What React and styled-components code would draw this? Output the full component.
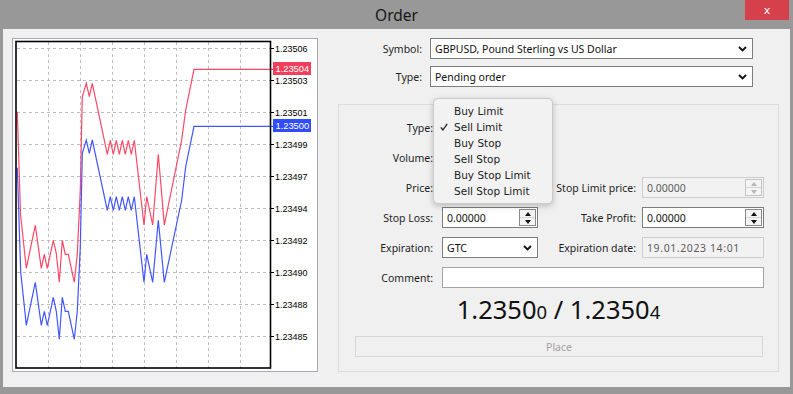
import React from 'react';
import styled, { createGlobalStyle } from 'styled-components';

const GlobalStyle = createGlobalStyle`
  html, body {
    margin: 0;
    padding: 0;
    background: #989898;
  }
  body {
    font-family: "Noto Sans", "DejaVu Sans", sans-serif;
    color: #1e1e1e;
  }
`;

const Window = styled.div`
  width: 793px;
  height: 394px;
  background: #989898;
  display: flex;
  flex-direction: column;
  overflow: hidden;
`;

const TitleBar = styled.div`
  height: 29px;
  flex: none;
  display: grid;
  grid-template-columns: 1fr auto 1fr;
  align-items: center;
`;

const Title = styled.span`
  grid-column: 2;
  font-size: 15.5px;
  color: #161616;
`;

const CloseButton = styled.div`
  grid-column: 3;
  justify-self: end;
  align-self: start;
  margin-right: 4px;
  width: 44px;
  height: 20px;
  background: #d5404b;
  color: #fff;
  display: flex;
  align-items: center;
  justify-content: center;
  font-family: "DejaVu Sans", sans-serif;
  font-size: 11px;
`;

const Body = styled.div`
  margin: 0 3px;
  height: 358px;
  box-sizing: border-box;
  background: #f0f0f0;
  display: flex;
  gap: 20px;
  padding: 9px 0 0 9px;
`;

const ChartPanel = styled.div`
  width: 306px;
  height: 334px;
  box-sizing: border-box;
  border: 1px solid #a8a8b0;
  background: #fff;
  flex: none;

  svg {
    display: block;
  }
`;

const Form = styled.div`
  width: 441px;
  display: flex;
  flex-direction: column;
`;

const TopRow = styled.div`
  display: grid;
  grid-template-columns: 92px 323px;
  height: 21px;
  margin-bottom: 7px;
  align-items: center;
`;

const Label = styled.span`
  text-align: right;
  padding-right: ${({ $pad }) => $pad || 8}px;
  font-size: 10.5px;
  white-space: nowrap;
`;

const Select = styled.div`
  height: 21px;
  box-sizing: border-box;
  border: 1px solid #7c7c7c;
  background: #fff;
  display: flex;
  align-items: center;
  justify-content: space-between;
  padding: 0 5px 0 4px;
  font-size: 10.5px;
  color: #111;
`;

const Input = styled.div`
  height: 21px;
  box-sizing: border-box;
  border: 1px solid ${({ $disabled, $light }) => ($disabled ? '#cdcdcd' : $light ? '#a4a4a4' : '#7c7c7c')};
  background: ${({ $disabled }) => ($disabled ? '#f2f2f2' : '#fff')};
  color: ${({ $disabled }) => ($disabled ? '#5c5c5c' : '#111')};
  display: flex;
  align-items: stretch;
  font-size: 10.5px;
  letter-spacing: ${({ $spaced }) => ($spaced ? '0.6px' : '0')};
  grid-column: ${({ $span }) => $span || 'auto'};
`;

const InputValue = styled.span`
  flex: 1;
  display: flex;
  align-items: center;
  padding-left: 4px;
`;

const Spin = styled.div`
  width: 17px;
  margin: 1px;
  box-sizing: border-box;
  border: 1px solid ${({ $disabled }) => ($disabled ? '#c4c4c4' : '#8a8a8a')};
  background: #f4f4f4;
  display: flex;
  flex-direction: column;
`;

const SpinHalf = styled.div`
  flex: 1;
  display: flex;
  align-items: center;
  justify-content: center;
  & + & {
    border-top: 1px solid ${({ $disabled }) => ($disabled ? '#d4d4d4' : '#a8a8a8')};
  }
`;

const Arrow = styled.div`
  width: 0;
  height: 0;
  border-left: 3px solid transparent;
  border-right: 3px solid transparent;
  ${({ $down, $disabled }) =>
    $down
      ? `border-top: 4px solid ${$disabled ? '#b8b8b8' : '#111'};`
      : `border-bottom: 4px solid ${$disabled ? '#b8b8b8' : '#111'};`}
`;

const GroupBox = styled.div`
  position: relative;
  margin-top: 10px;
  height: 268px;
  box-sizing: border-box;
  border: 1px solid #dcdcdc;
  padding-top: 12px;
  display: flex;
  flex-direction: column;
`;

const FieldGrid = styled.div`
  display: grid;
  grid-template-columns: 103px 96px 104px 122px;
  grid-auto-rows: 21px;
  row-gap: 9px;
  align-items: center;
`;

const Quote = styled.div`
  margin-top: 6px;
  text-align: center;
  font-size: 25.5px;
  line-height: 30px;
  color: #111;
`;

const Small = styled.span`
  font-size: 18.5px;
`;

const PlaceButton = styled.div`
  margin: 9px 15px 0 16px;
  height: 21px;
  box-sizing: border-box;
  border: 1px solid #d6d6d6;
  display: flex;
  align-items: center;
  justify-content: center;
  font-size: 10.5px;
  color: #a2a2a2;
`;

const Popup = styled.div`
  position: absolute;
  left: 94px;
  top: -7px;
  width: 120px;
  box-sizing: border-box;
  padding: 4px 0;
  background: #f2f2f2;
  border: 1px solid #cacaca;
  border-radius: 5px;
  box-shadow: 0 2px 6px rgba(0, 0, 0, 0.22);
  font-family: "DejaVu Sans", sans-serif;
  font-size: 10.5px;
  color: #222;
`;

const PopupItem = styled.div`
  height: 16px;
  display: flex;
  align-items: center;
  padding-left: 6px;
  gap: 6px;
`;

const CheckSlot = styled.span`
  width: 8px;
  display: flex;
  align-items: center;
`;

const Chevron = () => (
  <svg width="9" height="6" viewBox="0 0 9 6">
    <polyline points="1,1 4.5,4.5 8,1" fill="none" stroke="#111" strokeWidth="1.8" />
  </svg>
);

const SpinBox = ({ disabled }) => (
  <Spin $disabled={disabled}>
    <SpinHalf $disabled={disabled}>
      <Arrow $disabled={disabled} />
    </SpinHalf>
    <SpinHalf $disabled={disabled}>
      <Arrow $down $disabled={disabled} />
    </SpinHalf>
  </Spin>
);

const gridX = [48, 80, 112, 144, 176, 208, 240];
const levels = [
  [48, '1.23506'],
  [80, '1.23503'],
  [112, '1.23501'],
  [144, '1.23499'],
  [176, '1.23497'],
  [208, '1.23494'],
  [240, '1.23492'],
  [272, '1.23490'],
  [304, '1.23488'],
  [336, '1.23485'],
];

const askLine = [
  [17.3, 111.7], [20.5, 214], [26.3, 268.3], [35.3, 225.3], [41.3, 268.3], [44.3, 254.3],
  [47.3, 268.3], [53.3, 240.3], [56.3, 253.3], [59.3, 282.3], [62.3, 240.3], [65.3, 254.3],
  [68.3, 254.3], [74.3, 282.3], [77.3, 254], [80.3, 190], [82.3, 96.7], [86.3, 83.3],
  [89.3, 96.7], [92.3, 83.3], [107.3, 154.3], [110.3, 140.3], [113.3, 154.3], [116.3, 140.3],
  [119.3, 154.3], [122.3, 140.3], [125.3, 154.3], [128.3, 140.3], [131.3, 154.3], [134.3, 140.3],
  [144, 225], [146.7, 196.7], [152.7, 225], [158.3, 154.3], [164.3, 225], [181.7, 140],
  [185.7, 110], [194, 69.3], [273, 69.3],
];

const bidLine = [
  [17.3, 167.7], [20.7, 271.7], [26.3, 325.3], [35.3, 282.3], [41.3, 325.3], [44.3, 311.3],
  [47.3, 325.3], [53.3, 297.3], [56.3, 311.3], [59.3, 339.3], [62.3, 297.3], [65.3, 311.3],
  [68.3, 311.3], [74.3, 339.3], [77.3, 311], [80.3, 247], [82.3, 153.3], [86.3, 140],
  [89.3, 153.3], [92.3, 140], [107.3, 210.3], [110.3, 196.7], [113.3, 210.3], [116.3, 196.7],
  [119.3, 210.3], [122.3, 196.7], [125.3, 210.3], [128.3, 196.7], [131.3, 210.3], [134.3, 196.7],
  [144, 282.3], [146.7, 254.3], [152.7, 282.3], [158.3, 220.3], [164.3, 282.3], [181.7, 200],
  [185.7, 166.7], [194, 126.3], [273, 126.3],
];

const pts = (list) => list.map(([x, y]) => `${x},${y}`).join(' ');

const Chart = () => (
  <svg width="304" height="332" viewBox="13 39 304 332">
    {gridX.map((x) => (
      <line key={x} x1={x + 0.5} y1={42} x2={x + 0.5} y2={368} stroke="#bdbdbd" strokeDasharray="3 3" />
    ))}
    {levels.map(([y]) => (
      <line key={y} x1={17} y1={y + 0.5} x2={270} y2={y + 0.5} stroke="#bdbdbd" strokeDasharray="3 3" />
    ))}
    <polyline points={pts(askLine)} fill="none" stroke="#ff4766" strokeWidth="1.2" />
    <polyline points={pts(bidLine)} fill="none" stroke="#4256ff" strokeWidth="1.2" />
    <rect x={16} y={41.5} width={254.5} height={326.5} fill="none" stroke="#000" strokeWidth="1.6" />
    {levels.map(([y, label]) => (
      <g key={label}>
        <line x1={270} y1={y + 0.5} x2={274} y2={y + 0.5} stroke="#000" />
        <text x={275} y={y + 3.6} fontFamily="Liberation Sans, Arial, sans-serif" fontSize="9" fill="#000">
          {label}
        </text>
      </g>
    ))}
    <rect x={273} y={62} width={38} height={13} fill="#f2405c" />
    <text x={275.5} y={72} fontFamily="Liberation Sans, Arial, sans-serif" fontSize="9.3" fill="#fff">
      1.23504
    </text>
    <rect x={273} y={119} width={38} height={13} fill="#2f4dff" />
    <text x={275.5} y={129} fontFamily="Liberation Sans, Arial, sans-serif" fontSize="9.3" fill="#fff">
      1.23500
    </text>
  </svg>
);

const orderTypes = ['Buy Limit', 'Sell Limit', 'Buy Stop', 'Sell Stop', 'Buy Stop Limit', 'Sell Stop Limit'];

export default function App() {
  return (
    <>
      <GlobalStyle />
      <Window>
        <TitleBar>
          <Title>Order</Title>
          <CloseButton>x</CloseButton>
        </TitleBar>
        <Body>
          <ChartPanel>
            <Chart />
          </ChartPanel>
          <Form>
            <TopRow>
              <Label>Symbol:</Label>
              <Select>
                GBPUSD, Pound Sterling vs US Dollar
                <Chevron />
              </Select>
            </TopRow>
            <TopRow>
              <Label>Type:</Label>
              <Select>
                Pending order
                <Chevron />
              </Select>
            </TopRow>
            <GroupBox>
              <FieldGrid>
                <Label $pad={9}>Type:</Label>
                <Select>
                  <span />
                  <Chevron />
                </Select>
                <span />
                <span />

                <Label $pad={9}>Volume:</Label>
                <Input>
                  <InputValue />
                  <SpinBox />
                </Input>
                <span />
                <span />

                <Label $pad={9}>Price:</Label>
                <Input>
                  <InputValue />
                  <SpinBox />
                </Input>
                <Label $pad={6}>Stop Limit price:</Label>
                <Input $disabled>
                  <InputValue>0.00000</InputValue>
                  <SpinBox disabled />
                </Input>

                <Label $pad={9}>Stop Loss:</Label>
                <Input>
                  <InputValue>0.00000</InputValue>
                  <SpinBox />
                </Input>
                <Label $pad={6}>Take Profit:</Label>
                <Input>
                  <InputValue>0.00000</InputValue>
                  <SpinBox />
                </Input>

                <Label $pad={9}>Expiration:</Label>
                <Select>
                  GTC
                  <Chevron />
                </Select>
                <Label $pad={6}>Expiration date:</Label>
                <Input $disabled $spaced>
                  <InputValue>19.01.2023 14:01</InputValue>
                </Input>

                <Label $pad={9}>Comment:</Label>
                <Input $light $span="2 / 5">
                  <InputValue />
                </Input>
              </FieldGrid>
              <Quote>
                1.2350<Small>0</Small> / 1.2350<Small>4</Small>
              </Quote>
              <PlaceButton>Place</PlaceButton>
              <Popup>
                {orderTypes.map((t) => (
                  <PopupItem key={t}>
                    <CheckSlot>
                      {t === 'Sell Limit' && (
                        <svg width="8" height="8" viewBox="0 0 8 8">
                          <path d="M0.8 4.4 L2.9 7 L7.2 0.8" fill="none" stroke="#222" strokeWidth="1.3" />
                        </svg>
                      )}
                    </CheckSlot>
                    {t}
                  </PopupItem>
                ))}
              </Popup>
            </GroupBox>
          </Form>
        </Body>
      </Window>
    </>
  );
}
